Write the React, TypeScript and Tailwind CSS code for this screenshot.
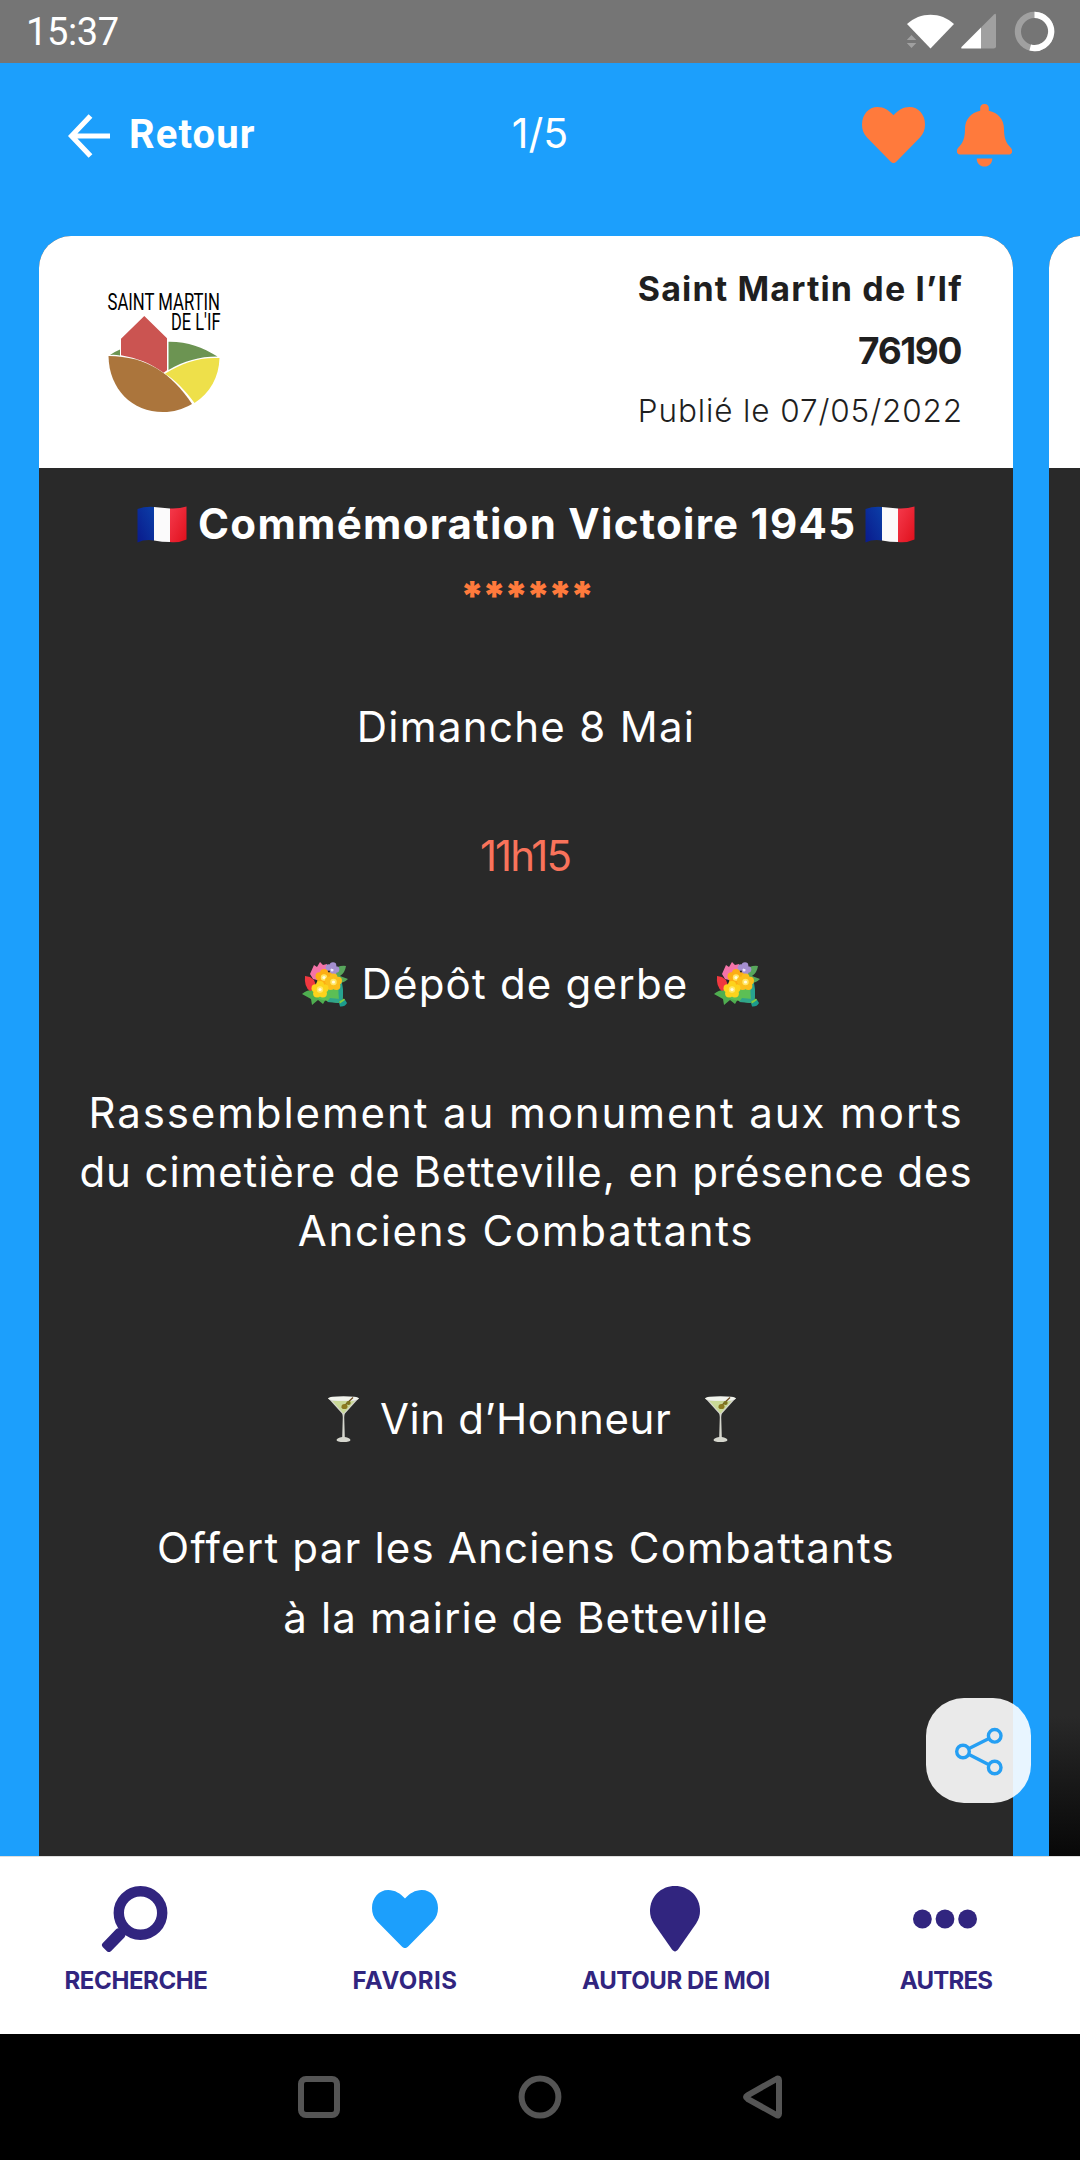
import type { ReactNode } from 'react';

const tabs = [
  { label: 'RECHERCHE', icon: SearchIcon, spacing: 'pl-[2px] tracking-[-0.4px]' },
  { label: 'FAVORIS', icon: FavoriteIcon, spacing: 'tracking-[0.5px]' },
  { label: 'AUTOUR DE MOI', icon: PinIcon, spacing: 'pl-[2px] tracking-[-0.4px]' },
  { label: 'AUTRES', icon: DotsIcon, spacing: 'pl-[2px] tracking-[-0.8px]' },
];

const HEART =
  'M31.5 8.5 C36 3.5 41 0 47.5 0 C56.5 0 63 8 63 18 C63 23.5 61.5 27.5 58 31.5 L34.5 56.5 C32.5 58.6 30.5 58.6 28.5 56.5 L5 31.5 C1.5 27.5 0 23.5 0 18 C0 8 6.5 0 15.5 0 C22 0 27 3.5 31.5 8.5 Z';

function SearchIcon() {
  return (
    <svg width="68" height="66" viewBox="0 0 68 66" className="text-[#31257f]">
      <circle cx="39.5" cy="27" r="21.7" fill="none" stroke="currentColor" strokeWidth="10.4" />
      <rect x="-5.8" y="-12.5" width="11.6" height="25" rx="3" fill="currentColor" transform="translate(12.6 54.2) rotate(44)" />
      <path d="M17 44 L22 40 L26 45 L21 50 Z" fill="currentColor" />
    </svg>
  );
}

function FavoriteIcon() {
  return (
    <svg width="66" height="58" viewBox="0 0 63 58" preserveAspectRatio="none" className="text-[#1c9ffc]">
      <path d={HEART} fill="currentColor" />
    </svg>
  );
}

function PinIcon() {
  return (
    <svg width="50" height="66" viewBox="0 0 50 69" preserveAspectRatio="none" className="text-[#31257f]">
      <path
        d="M25 0 C39 0 50 11 50 26 C50 31 48.8 35 46 39.5 L28 66.5 C26.3 69 23.7 69 22 66.5 L4 39.5 C1.2 35 0 31 0 26 C0 11 11 0 25 0 Z"
        fill="currentColor"
      />
    </svg>
  );
}

function DotsIcon() {
  return (
    <svg width="64" height="20" viewBox="0 0 64 20" className="text-[#31257f]">
      <circle cx="9.4" cy="10" r="9.4" fill="currentColor" />
      <circle cx="32" cy="10" r="9.4" fill="currentColor" />
      <circle cx="54.6" cy="10" r="9.4" fill="currentColor" />
    </svg>
  );
}

function StatusBar() {
  return (
    <div className="flex h-[63px] shrink-0 items-center justify-between bg-[#757575] pl-[26px] pr-[25px] text-white">
      <span className="font-[Roboto,sans-serif] text-[38px] leading-none tracking-[-0.4px]">15:37</span>
      <svg width="148" height="41" viewBox="907 12 148 41">
        <path d="M907 25 C920 12.5 941 12.5 954 25 L930.5 49.5 Z" fill="#fff" />
        <path d="M911.5 36 l4.8 5 h-9.6 Z M906.7 44 h9.6 l-4.8 5 Z" fill="#a0a0a0" />
        <path d="M981 28.5 L994 15.5 Q996 13.5 996 16.5 L996 47.5 Q996 49.5 993.5 49.5 L981 49.5 Z" fill="#a0a0a0" />
        <path d="M981 28.5 L981 49.5 L962.5 49.5 Q960 49.5 962 47.5 Z" fill="#fff" />
        <circle cx="1034.5" cy="32.5" r="16.6" fill="none" stroke="#a0a0a0" strokeWidth="6.2" />
        <path d="M1034.5 15.9 A16.6 16.6 0 1 1 1030.2 48.5" fill="none" stroke="#fff" strokeWidth="6.2" />
      </svg>
    </div>
  );
}

function TopBar() {
  return (
    <header className="grid h-[173px] shrink-0 grid-cols-3 items-start pl-[68px] pr-[68px] pt-[41px] text-white">
      <div className="flex items-center gap-[18px] pt-[8px]">
        <svg width="43" height="46" viewBox="0 0 43 46">
          <path d="M42 23 H5 M22.5 3 L3.5 23 L22.5 43" fill="none" stroke="currentColor" strokeWidth="5.2" />
        </svg>
        <span className="pb-[2px] font-[Roboto,sans-serif] text-[40px] font-bold leading-[46px] tracking-[1.1px]">Retour</span>
      </div>
      <span className="pt-[5px] text-center font-[Inter,sans-serif] text-[41px] leading-[48px]">1/5</span>
      <div className="flex justify-end gap-[32px]">
        <svg width="63" height="56" viewBox="0 0 63 58" preserveAspectRatio="none" className="mt-[3px]">
          <path d={HEART} fill="#ff7a3c" />
        </svg>
        <svg width="55" height="63" viewBox="0 0 55 66" preserveAspectRatio="none">
          <path
            d="M27.5 0 C30.5 0 31.8 2 31.8 4 V7 C41 9 47 16 47 26 C47 36 49 41 54 46 C56.5 49.5 55 53 51.5 53 H3.5 C0 53 -1.5 49.5 1 46 C6 41 8 36 8 26 C8 16 14 9 23.2 7 V4 C23.2 2 24.5 0 27.5 0 Z"
            fill="#ff7a3c"
          />
          <path d="M19.7 57 H35.3 C35.3 62 32 65.5 27.5 65.5 C23 65.5 19.7 62 19.7 57 Z" fill="#ff7a3c" />
        </svg>
      </div>
    </header>
  );
}

function TownLogo() {
  return (
    <svg width="120" height="134" viewBox="104 280 120 134" className="overflow-visible font-[Roboto,sans-serif]">
      <text x="107.5" y="310" fontSize="24.5" textLength="112.5" lengthAdjust="spacingAndGlyphs">SAINT MARTIN</text>
      <text x="171" y="330.3" fontSize="24.5" textLength="49.5" lengthAdjust="spacingAndGlyphs">DE L'IF</text>
      <path d="M110 355 Q115 351.5 120 349.5 V355.5 Q115 354.5 110 355 Z" fill="#6c9452" />
      <path d="M168.5 341.7 C188 341.5 202 347 217.5 356.5 C199 356.5 184 361 168.5 370 Z" fill="#6c9452" />
      <path d="M144.3 316 L167 338.3 V370.3 L163.5 372.8 C150 363 137 358 121 355.3 V338.8 Z" fill="#cb5451" />
      <path d="M108.5 356 C147 356.5 171 373 192 404 C182 409.5 174 412 163 412 C132 412 109 389 108.5 356 Z" fill="#ab753c" />
      <path d="M219.5 358 C198 357 182 363 165 373.8 C175 380 185 390 194.5 403 C210 393 219 377 219.5 358 Z" fill="#eee04a" />
    </svg>
  );
}

function Flag() {
  return (
    <svg width="50" height="37" viewBox="0 0 50 37">
      <defs>
        <linearGradient id="flagBlue" x1="1" y1="0" x2="0" y2="1">
          <stop offset="0%" stopColor="#0b3fa8" />
          <stop offset="100%" stopColor="#0a1a8c" />
        </linearGradient>
        <linearGradient id="flagRed" x1="0" y1="0" x2="1" y2="1">
          <stop offset="0%" stopColor="#f53a4c" />
          <stop offset="100%" stopColor="#e0101c" />
        </linearGradient>
      </defs>
      <path d="M.5 3 Q8 .3 17 1 V34.5 Q8 33 .5 36.5 Z" fill="url(#flagBlue)" />
      <path d="M17 1 Q25 1.5 33 2.5 V36 Q25 36 17 34.5 Z" fill="#fbfafb" />
      <path d="M33 2.5 Q42 3 49.5 .5 V33.5 Q42 37 33 36 Z" fill="url(#flagRed)" />
    </svg>
  );
}

function Flower({ x, y, color }: { x: number; y: number; color: string }) {
  return (
    <g transform={`translate(${x} ${y})`}>
      <g fill={color}>
        <circle cx="0" cy="-4.5" r="4" />
        <circle cx="4.5" cy="-1.3" r="4" />
        <circle cx="2.9" cy="4" r="4" />
        <circle cx="-2.9" cy="4" r="4" />
        <circle cx="-4.5" cy="-1.3" r="4" />
      </g>
      <circle r="3.2" fill="#ffe766" />
      <circle r="1.6" fill="#fffbe0" />
    </g>
  );
}

function Bouquet() {
  return (
    <svg width="46" height="45" viewBox="0 0 46 45">
      <path d="M30 9 Q36 3 44 4 Q43 11 38 14 L46 17 Q42 21 37 21 Z" fill="#58a65c" />
      <path d="M0 32 Q7 26 15 29 L24 37 L21 42 L16 38 L10 43 L9 37 Z" fill="#4fae50" />
      <path d="M14 32 L38 18 Q42 28 40.5 38 L36 41 Q24 39 17 37 Z" fill="#5cbf55" />
      <path d="M36 22 L39.5 19 Q42 29 40.5 38 L37 39 Z" fill="#27a290" />
      <path d="M28 36 L38 37 L37 41 L25 40 Z" fill="#2fa58a" />
      <path d="M37 41 L42.5 37 L45 41 Q43 45 38 44.5 Z" fill="#1c9b8d" />
      <path d="M37 40 L42 36.5 L43 38 L38 41.5 Z" fill="#86cf3f" />
      <path d="M8 12 L12 3 L15 5 L18 0 L21 3 L25 2 L26 12 L19 19 L11 17 Z" fill="#f473a8" />
      <path d="M3 14 L8 15 L12 18 L15 26 L8 29 Q2 25 3 14 Z" fill="#f0383f" />
      <g fill="#a58fd0">
        <circle cx="31" cy="3.5" r="3.3" />
        <circle cx="34" cy="7.5" r="3.3" />
        <circle cx="31" cy="11" r="3.3" />
        <circle cx="27" cy="5.5" r="3.3" />
      </g>
      <circle cx="30" cy="8" r="1.6" fill="#eee7ff" />
      <Flower x={22} y={15.5} color="#fdae13" />
      <Flower x={31.5} y={20} color="#fbbf1c" />
      <Flower x={18} y={27.5} color="#fdd31c" />
    </svg>
  );
}

function Cocktail() {
  return (
    <svg width="31" height="46" viewBox="0 0 31 46">
      <path
        d="M0 2 H31 L17 17.5 Q16 19 16.3 24 L16.8 41 Q22 42 22.5 44 Q22 46 15.5 46 Q9 46 8.5 44 Q9 42 14.2 41 L14.7 24 Q15 19 14 17.5 Z"
        fill="#d5d6cd"
      />
      <path d="M4.5 5 H26.5 L16.5 16.5 Q15.5 17.8 14.5 16.5 Z" fill="#c9d897" />
      <ellipse cx="15.5" cy="2.5" rx="15.3" ry="2.3" fill="#f1f3ec" />
      <path d="M14 12 L25 1.5" stroke="#6a4a1c" strokeWidth="1.2" />
      <ellipse cx="16.5" cy="10.5" rx="3" ry="2.6" fill="#8c7a1f" />
      <ellipse cx="20.5" cy="7" rx="2.2" ry="1.9" fill="#7d7420" />
    </svg>
  );
}

function CardHeader() {
  return (
    <div className="flex h-[232px] items-start justify-between bg-white pl-[65px] pr-[50px] pt-[22px] text-[#1f1f1f]">
      <div className="pt-[22px]">
        <TownLogo />
      </div>
      <div className="flex flex-col items-end leading-[62px]">
        <h1 className="text-[34px] font-bold tracking-[1.15px]">Saint Martin de l’If</h1>
        <p className="pr-[2px] text-[37px] font-bold tracking-[-1.4px]">76190</p>
        <p className="text-[31.5px] font-light leading-[58px] tracking-[0.88px]">Publié le 07/05/2022</p>
      </div>
    </div>
  );
}

function Row({ className, children }: { className: string; children: ReactNode }) {
  return <div className={`flex items-center justify-center whitespace-nowrap leading-[60px] ${className}`}>{children}</div>;
}

function Announcement() {
  return (
    <article className="w-[974px] shrink-0 overflow-hidden rounded-t-[32px] bg-[#292929] font-[Inter,sans-serif]">
      <CardHeader />
      <div className="flex flex-col pt-[26px] text-center text-[42px] text-white">
        <Row className="gap-[11px] font-bold">
          <Flag />
          <h2 className="w-[656px] tracking-[1.3px]">Commémoration Victoire 1945</h2>
          <Flag />
        </Row>
        <Row className="mt-[12px] text-[40px] font-black tracking-[-2.3px] text-[#ff7a3c]">******</Row>
        <Row className="mt-[71px] tracking-[1.3px]">Dimanche 8 Mai</Row>
        <Row className="mt-[69px] pr-[2px] tracking-[-2px] text-[#f9735b]">11h15</Row>
        <Row className="mt-[68px] pl-[9px]">
          <Bouquet />
          <span className="ml-[14px] mr-[26px] w-[326px] tracking-[1.2px]">Dépôt de gerbe</span>
          <Bouquet />
        </Row>
        <p className="mt-[69px] whitespace-nowrap leading-[59px]">
          <span className="tracking-[1.9px]">Rassemblement au monument aux morts</span>
          <br />
          <span className="tracking-[0.9px]">du cimetière de Betteville, en présence des</span>
          <br />
          <span className="tracking-[1.7px]">Anciens Combattants</span>
        </p>
        <Row className="mt-[129px] pl-[12px]">
          <Cocktail />
          <span className="ml-[21px] mr-[34px] w-[291px] tracking-[0.6px]">Vin d’Honneur</span>
          <Cocktail />
        </Row>
        <Row className="mt-[69px] tracking-[1.2px]">Offert par les Anciens Combattants</Row>
        <Row className="mt-[10px] tracking-[1.15px]">à la mairie de Betteville</Row>
      </div>
    </article>
  );
}

function ShareButton() {
  return (
    <button className="absolute bottom-[53px] right-[49px] flex size-[105px] items-center justify-center rounded-[38px] bg-white/90">
      <svg width="50" height="50" viewBox="0 0 50 50" fill="none" stroke="#259ff3" strokeWidth="3.4">
        <circle cx="9" cy="25.5" r="6.3" />
        <circle cx="40.7" cy="9.8" r="6.3" />
        <circle cx="40.7" cy="41.5" r="6.3" />
        <path d="M15 22.5 L34.5 12.8 M15 28.5 L34.5 38.5" />
      </svg>
    </button>
  );
}

export default function App() {
  return (
    <div className="flex h-[2160px] w-[1080px] flex-col overflow-hidden bg-[#1c9ffc]">
      <StatusBar />
      <TopBar />

      {/* Carousel */}
      <main className="relative flex h-[1620px] shrink-0 gap-[36px] overflow-hidden pl-[39px]">
        <Announcement />
        <article className="flex w-[974px] shrink-0 flex-col overflow-hidden rounded-t-[32px] bg-[#292929]">
          <div className="h-[232px] bg-white" />
          <div className="mt-auto h-[140px] bg-gradient-to-b from-[#292929] to-[#080808]" />
        </article>
        <ShareButton />
      </main>

      {/* Bottom tabs */}
      <nav className="grid h-[178px] shrink-0 grid-cols-4 border-t border-[#dedede] bg-white font-[Inter,sans-serif] text-[24px] font-bold text-[#31257f]">
        {tabs.map((tab) => (
          <div key={tab.label} className="flex flex-col items-center pt-[29px]">
            <div className="flex h-[66px] items-center">
              <tab.icon />
            </div>
            <span className={`mt-[13px] leading-[31px] ${tab.spacing}`}>{tab.label}</span>
          </div>
        ))}
      </nav>

      {/* System navigation */}
      <div className="flex h-[126px] shrink-0 items-center justify-center bg-black">
        <svg width="490" height="50" viewBox="295 2080 490 50" fill="none" stroke="#555" strokeWidth="6">
          <rect x="301" y="2087" width="36" height="36" rx="5" />
          <circle cx="540" cy="2105" r="18.4" />
          <path d="M779 2088.5 Q779 2085.5 776.5 2087 L747.5 2103.3 Q744.5 2105 747.5 2106.8 L776.5 2123 Q779 2124.5 779 2121.5 Z" />
        </svg>
      </div>
    </div>
  );
}
